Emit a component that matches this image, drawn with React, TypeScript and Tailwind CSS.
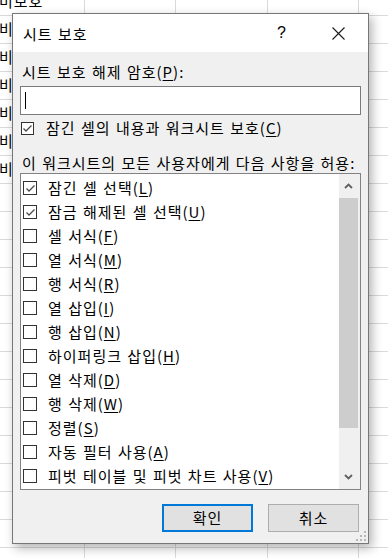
import React from 'react';

const items = [
    { label: '잠긴 셀 선택', key: 'L', checked: true },
    { label: '잠금 해제된 셀 선택', key: 'U', checked: true },
    { label: '셀 서식', key: 'F', checked: false },
    { label: '열 서식', key: 'M', checked: false },
    { label: '행 서식', key: 'R', checked: false },
    { label: '열 삽입', key: 'I', checked: false },
    { label: '행 삽입', key: 'N', checked: false },
    { label: '하이퍼링크 삽입', key: 'H', checked: false },
    { label: '열 삭제', key: 'D', checked: false },
    { label: '행 삭제', key: 'W', checked: false },
    { label: '정렬', key: 'S', checked: false },
    { label: '자동 필터 사용', key: 'A', checked: false },
    { label: '피벗 테이블 및 피벗 차트 사용', key: 'V', checked: false },
];

function CheckBox({ checked, size }: { checked: boolean; size: 'sm' | 'md' }) {
    const box = size === 'sm' ? 'w-[13px] h-[13px]' : 'w-[14px] h-[14px]';
    return (
        <div className={`${box} shrink-0 border border-[#333333] bg-white flex items-center justify-center`}>
            {checked && (
                <svg width="11" height="11" viewBox="0 0 11 11">
                    <path d="M1.5 5.5 L4 8 L9.5 2.5" fill="none" stroke="#4a4a4a" strokeWidth="1.3" />
                </svg>
            )}
        </div>
    );
}

function Mnemonic({ k }: { k: string }) {
    return (
        <>
            (<span className="underline underline-offset-2">{k}</span>)
        </>
    );
}

function SheetBackground() {
    const rows = Array.from({ length: 21 });
    return (
        <div className="flex flex-col mt-[-12px]">
            {rows.map((_, i) => (
                <div key={i} className="flex h-[28px] shrink-0 border-b border-[#dadada]">
                    <div className="w-[85px] shrink-0 border-r border-[#dadada] pt-[4px] leading-[18px] text-[15px] whitespace-nowrap overflow-visible">
                        <span className="ml-[-1px]">{i < 7 ? '비보호' : ''}</span>
                    </div>
                    <div className="w-[91px] shrink-0 border-r border-[#dadada]" />
                    <div className="w-[92px] shrink-0 border-r border-[#dadada]" />
                    <div className="w-[91px] shrink-0 border-r border-[#dadada]" />
                    <div className="flex-1" />
                </div>
            ))}
        </div>
    );
}

export default function App() {
    return (
        <div className="relative w-[388px] h-[558px] overflow-hidden bg-white text-black font-['Noto_Sans_CJK_KR',sans-serif] tracking-[1px] [word-spacing:1px]">
            <SheetBackground />

            {/* 시트 보호 dialog */}
            <div className="absolute left-[12px] top-[13px] w-[357px] h-[531px] border border-[#777777] bg-[#f0f0f0] shadow-[3px_4px_10px_rgba(0,0,0,0.3)] flex flex-col">
                <div className="h-[38px] shrink-0 bg-white flex items-center pl-[10px] pr-[23px]">
                    <span className="text-[15px] leading-[20px] mt-[1px]">시트 보호</span>
                    <span className="ml-auto text-[16px] leading-[20px] tracking-normal font-['Liberation_Sans',sans-serif]">?</span>
                    <svg className="ml-[46px]" width="13" height="13" viewBox="0 0 13 13">
                        <path d="M0.5 0.5 L12.5 12.5 M12.5 0.5 L0.5 12.5" stroke="#1a1a1a" strokeWidth="1.1" />
                    </svg>
                </div>

                <div className="flex-1 flex flex-col px-[7px] pt-[10px]">
                    <div className="pl-[2px] text-[15px] leading-[20px]">
                        시트 보호 해제 암호<Mnemonic k="P" />:
                    </div>
                    <div className="mt-[4px] h-[29px] border border-[#7a7a7a] bg-white flex items-center pl-[4px]">
                        <div className="w-px h-[17px] bg-black" />
                    </div>

                    <div className="mt-[3px] h-[20px] flex items-center pl-[1px]">
                        <CheckBox checked size="sm" />
                        <span className="ml-[12px] text-[15px] leading-[20px] whitespace-nowrap">
                            잠긴 셀의 내용과 워크시트 보호<Mnemonic k="C" />
                        </span>
                    </div>

                    <div className="mt-[15px] pl-[2px] text-[15px] leading-[20px] whitespace-nowrap">
                        이 워크시트의 모든 사용자에게 다음 사항을 허용:
                    </div>

                    <div className="h-[317px] border border-[#828282] bg-white flex">
                        <div className="flex-1 flex flex-col pt-[2px] pl-[2px] overflow-hidden">
                            {items.map((it) => (
                                <div key={it.key} className="h-[24px] shrink-0 flex items-center">
                                    <CheckBox checked={it.checked} size="md" />
                                    <span className="ml-[11px] text-[15px] leading-[20px] whitespace-nowrap">
                                        {it.label}
                                        <Mnemonic k={it.key} />
                                    </span>
                                </div>
                            ))}
                        </div>
                        <div className="w-[21px] shrink-0 bg-[#f0f0f0] flex flex-col pr-[2px]">
                            <div className="h-[24px] flex items-center justify-center">
                                <svg width="9" height="6" viewBox="0 0 9 6">
                                    <path d="M1 5 L4.5 1.5 L8 5" fill="none" stroke="#606060" strokeWidth="1.8" />
                                </svg>
                            </div>
                            <div className="h-[230px] bg-[#cdcdcd]" />
                            <div className="flex-1" />
                            <div className="h-[24px] flex items-center justify-center">
                                <svg width="9" height="6" viewBox="0 0 9 6">
                                    <path d="M1 1 L4.5 4.5 L8 1" fill="none" stroke="#606060" strokeWidth="1.8" />
                                </svg>
                            </div>
                        </div>
                    </div>

                    <div className="mt-[14px] flex justify-end gap-[15px] pr-[2px]">
                        <button className="w-[91px] h-[28px] border-2 border-[#0078d7] bg-[#e1e1e1] text-[15px] leading-[20px]">
                            확인
                        </button>
                        <button className="w-[91px] h-[28px] border border-[#adadad] bg-[#e1e1e1] text-[15px] leading-[20px]">
                            취소
                        </button>
                    </div>
                </div>

                <svg className="absolute right-[2px] bottom-[2px]" width="10" height="10" viewBox="0 0 10 10">
                    <g fill="#b8b8b8">
                        <rect x="8" y="0" width="2" height="2" />
                        <rect x="4" y="4" width="2" height="2" />
                        <rect x="8" y="4" width="2" height="2" />
                        <rect x="0" y="8" width="2" height="2" />
                        <rect x="4" y="8" width="2" height="2" />
                        <rect x="8" y="8" width="2" height="2" />
                    </g>
                </svg>
            </div>
        </div>
    );
}
